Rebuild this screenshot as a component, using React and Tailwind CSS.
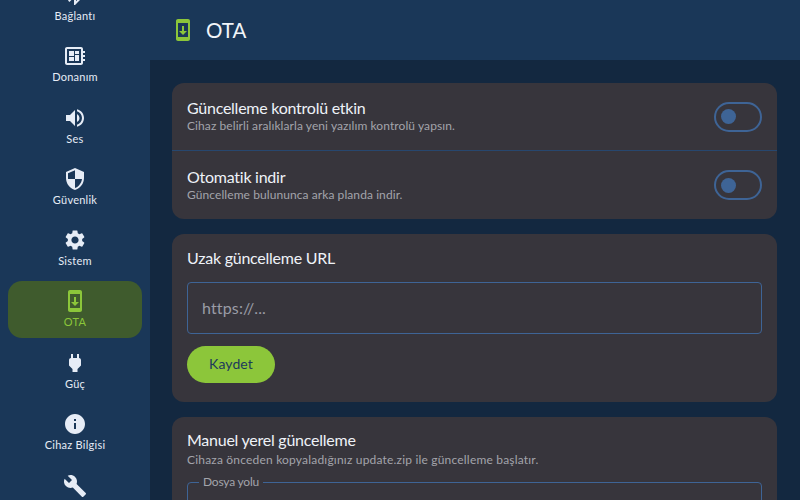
import React from "react";
import { MdDeveloperBoard, MdVolumeUp, MdSecurity, MdSettings, MdSystemUpdate, MdPower, MdInfo, MdBuild, MdBluetooth } from "react-icons/md";

const items = [
  { label: "Bağlantı", Icon: MdBluetooth },
  { label: "Donanım", Icon: MdDeveloperBoard },
  { label: "Ses", Icon: MdVolumeUp },
  { label: "Güvenlik", Icon: MdSecurity },
  { label: "Sistem", Icon: MdSettings },
  { label: "OTA", Icon: MdSystemUpdate, active: true },
  { label: "Güç", Icon: MdPower },
  { label: "Cihaz Bilgisi", Icon: MdInfo },
];

function Toggle() {
  return (
    <div className="flex h-[30px] w-[48px] shrink-0 items-center rounded-full border-2 border-[#3e6496] pl-[5px]">
      <div className="h-[15px] w-[15px] rounded-full bg-[#3e6496]" />
    </div>
  );
}

function Row({ title, sub, border }) {
  return (
    <div className={`flex h-[68px] items-center justify-between px-[15px] ${border ? "border-b border-[#27476f]" : ""}`}>
      <div className="flex flex-col pb-[2px]">
        <div className="text-[16px] leading-[20px] tracking-[-0.25px] text-[#eef2f8]">{title}</div>
        <div className="text-[12px] leading-[15px] tracking-[0.08px] text-[#a3a4ab]">{sub}</div>
      </div>
      <Toggle />
    </div>
  );
}

export default function App() {
  return (
    <div className="flex h-[500px] w-[800px] overflow-hidden bg-[#132840] font-['Lato',sans-serif]">
      <aside className="flex h-[500px] w-[150px] shrink-0 flex-col overflow-hidden bg-[#1a3758] px-[8px]">
        <div className="mt-[-25px] flex flex-col gap-[4.3px]">
          {items.map(({ label, Icon, active }) => (
            <div
              key={label}
              className={`flex h-[57px] shrink-0 flex-col items-center justify-center gap-[2px] rounded-[14px] pb-[1px] ${active ? "bg-[#3f5b2d] text-[#8cc63a]" : "text-[#e6ecf6]"}`}
            >
              <Icon className="text-[24px]" />
              <span className="text-[11px] leading-[14px] tracking-[0.25px]">{label}</span>
            </div>
          ))}
          <div className="flex h-[57px] shrink-0 flex-col items-center text-[#e6ecf6]">
            <div className="flex h-[41px] items-center"><MdBuild className="text-[24px]" /></div>
          </div>
        </div>
      </aside>
      <main className="flex min-w-0 flex-1 flex-col">
        <header className="flex h-[60px] shrink-0 items-center gap-[11px] bg-[#1a3758] pl-[21px]">
          <MdSystemUpdate className="text-[24px] text-[#8cc63a]" />
          <h1 className="text-[20.5px] font-normal text-[#f1f4f9]">OTA</h1>
        </header>
        <div className="flex flex-col gap-[15px] overflow-hidden pl-[22px] pr-[23px] pt-[23px]">
          <section className="flex flex-col rounded-[12px] bg-[#37353c]">
            <Row title="Güncelleme kontrolü etkin" sub="Cihaz belirli aralıklarla yeni yazılım kontrolü yapsın." border />
            <Row title="Otomatik indir" sub="Güncelleme bulununca arka planda indir." />
          </section>
          <section className="flex flex-col rounded-[12px] bg-[#37353c] px-[15px] pb-[19px] pt-[14px]">
            <h2 className="text-[16px] font-normal leading-[20px] tracking-[-0.25px] text-[#eef2f8]">Uzak güncelleme URL</h2>
            <div className="mt-[14px] flex h-[52px] items-center rounded-[4px] border border-[#3e6496] px-[14px] text-[16px] tracking-[0.15px] text-[#9a9ca6]">https://...</div>
            <button className="mt-[12px] h-[37px] w-[88px] rounded-full bg-[#8cc63a] pb-[2px] text-[14px] tracking-[0.1px] text-[#1d3a5c]">Kaydet</button>
          </section>
          <section className="flex h-[120px] shrink-0 flex-col rounded-[12px] bg-[#37353c] px-[15px] pt-[13px]">
            <h2 className="text-[16px] font-normal leading-[20px] tracking-[-0.25px] text-[#eef2f8]">Manuel yerel güncelleme</h2>
            <p className="mt-[2px] text-[12px] leading-[15px] tracking-[0.19px] text-[#a3a4ab]">Cihaza önceden kopyaladığınız update.zip ile güncelleme başlatır.</p>
            <fieldset className="mt-[9px] h-[60px] rounded-[4px] border border-[#3e6496] px-[11px]">
              <legend className="px-[4px] text-[12px] leading-[12px] tracking-[-0.2px] text-[#a3a4ab]">Dosya yolu</legend>
            </fieldset>
          </section>
        </div>
      </main>
    </div>
  );
}
